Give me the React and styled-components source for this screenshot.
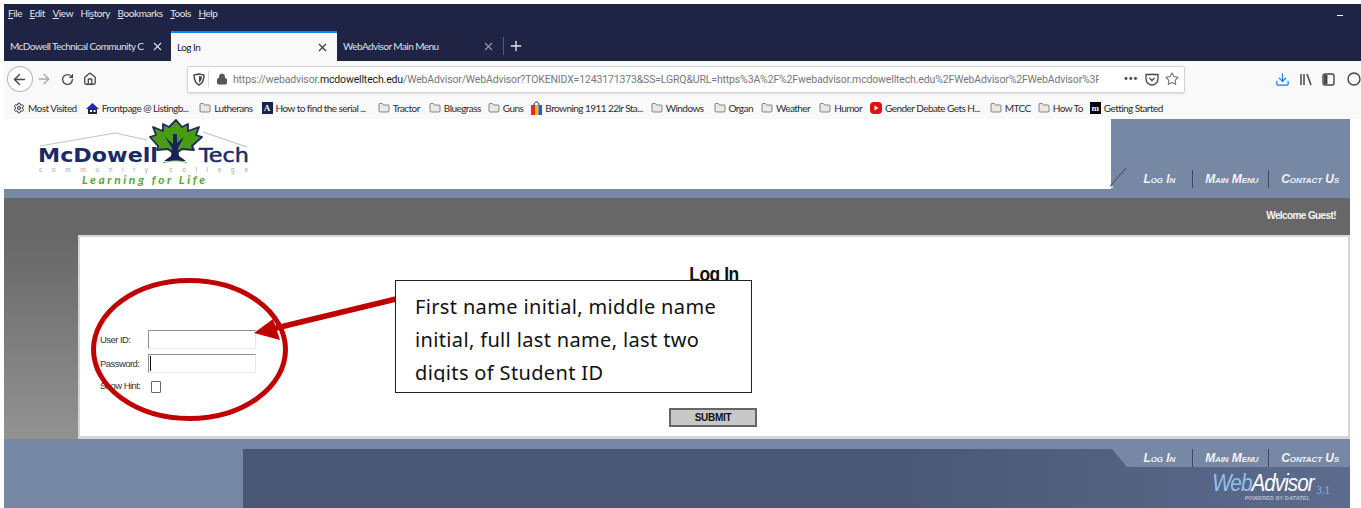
import styled, { createGlobalStyle } from 'styled-components'
import { ArrowLeft, ArrowRight, RotateCw, Home, X, Plus, Lock, Star, Download, Settings, Folder } from 'lucide-react'

const GlobalStyle = createGlobalStyle`
  html, body {
    margin: 0;
    background: #fff;
  }
  * {
    box-sizing: border-box;
  }
`

const Screen = styled.div`
  position: relative;
  width: 1361px;
  height: 508px;
  padding: 4px 0 0 4px;
  overflow: hidden;
  background: #fff;
  font-family: "Lato", "Liberation Sans", sans-serif;
`

/* browser chrome */
const MenuBar = styled.div`
  display: flex;
  align-items: center;
  height: 27px;
  padding: 0 18px 10px 4px;
  gap: 7.5px;
  background: #1f2344;
  color: #e4e5ea;
  font-size: 10px;
  letter-spacing: -0.42px;
  u { text-underline-offset: 1px; }
`
const Minimize = styled.span`
  width: 6px;
  height: 1px;
  margin-left: auto;
  margin-top: 6px;
  background: #fff;
`
const TabBar = styled.div`
  display: flex;
  align-items: stretch;
  height: 30px;
  background: #1f2344;
  color: #dfe0e6;
  font-size: 10px;
  letter-spacing: -0.55px;
`
const Tab = styled.div`
  display: flex;
  align-items: center;
  justify-content: space-between;
  width: ${p => p.$width}px;
  padding: 0 ${p => p.$right}px 0 ${p => p.$left}px;
  white-space: nowrap;
  ${p => p.$active && `
    background: #f9f9fa;
    color: #222;
    border-top: 2px solid #0a84ff;
  `}
`
const TabTitle = styled.span`
  display: block;
  width: ${p => p.$width}px;
  overflow: hidden;
`
const TabSep = styled.span`
  width: 1px;
  height: 18px;
  margin: 6px 4px 0 1px;
  background: #555a76;
`
const NewTab = styled.span`
  display: flex;
  align-items: center;
  color: #e4e5ea;
`
const NavBar = styled.div`
  display: flex;
  align-items: center;
  height: 33px;
  padding-top: 3px;
  background: #f9f9fa;
  color: #45454d;
`
const BackButton = styled.span`
  display: flex;
  align-items: center;
  justify-content: center;
  width: 26px;
  height: 26px;
  margin-left: 3px;
  border: 1px solid #b4b4b8;
  border-radius: 50%;
  background: #fff;
`
const NavIcon = styled.span`
  display: flex;
  margin-left: ${p => p.$gap}px;
  color: ${p => p.$color || 'inherit'};
`
const UrlBar = styled.div`
  display: flex;
  align-items: center;
  width: 1000px;
  height: 27px;
  margin-left: 90px;
  padding: 0 5px 0 5px;
  background: #fff;
  border: 1px solid #d4d4d6;
  border-radius: 2px;
  box-shadow: 0 1px 2px rgba(0, 0, 0, 0.12);
  font-family: "Roboto", sans-serif;
  font-size: 10.5px;
  letter-spacing: -0.15px;
  color: #77777d;
  white-space: nowrap;
`
const UrlText = styled.span`
  width: 866px;
  overflow: hidden;
  margin-left: 5px;
  b {
    font-weight: 400;
    color: #1c1c20;
  }
`
const UrlSep = styled.span`
  width: 1px;
  height: 16px;
  margin: 0 7px 0 3px;
  background: #d8d8da;
`
const Dots = styled.span`
  margin-left: auto;
  font-size: 12px;
  font-weight: 700;
  letter-spacing: 0.5px;
  color: #45454d;
  line-height: 8px;
`
const ToolbarGlyph = styled.svg`
  display: block;
  margin-left: ${p => p.$gap}px;
`
const BookmarkBar = styled.div`
  display: flex;
  align-items: center;
  height: 25px;
  padding: 3px 0 0 9px;
  background: #f9f9fa;
  color: #2c2c30;
  font-size: 10px;
  letter-spacing: -0.55px;
  white-space: nowrap;
`
const Bookmark = styled.span`
  display: flex;
  align-items: center;
  gap: 3px;
  margin-right: ${p => p.$gap ?? 8}px;
`
const Badge = styled.span`
  display: flex;
  align-items: center;
  justify-content: center;
  width: 11px;
  height: 12px;
  background: ${p => p.$bg};
  color: #fff;
  font: 700 9px "Liberation Serif", serif;
  letter-spacing: 0;
`

/* site header */
const Site = styled.div`
  width: 1346px;
`
const SiteHeader = styled.header`
  display: flex;
  justify-content: space-between;
  height: 70px;
`
const Logo = styled.svg`
  display: block;
`
const HeaderPanel = styled.div`
  display: flex;
  align-items: flex-end;
  justify-content: flex-end;
  width: 239px;
  padding-bottom: 1px;
  background: #7688a4;
`
const NavLinks = styled.nav`
  display: flex;
  align-items: stretch;
  height: 18px;
  padding-right: 11px;
`
const NavLink = styled.a`
  display: flex;
  align-items: center;
  padding: 0 ${p => p.$right}px 0 ${p => p.$left}px;
  color: #f1f3f6;
  font: italic 700 12px "Liberation Sans", sans-serif;
  font-variant: small-caps;
  letter-spacing: -0.1px;
  white-space: nowrap;
  & + & {
    border-left: 1px solid #3c4a66;
  }
`
const Notch = styled.svg`
  margin: 0 auto 0 -2px;
  align-self: flex-end;
`
const Divider = styled.div`
  height: 9px;
  background: #7688a4;
`
const WelcomeBar = styled.div`
  display: flex;
  align-items: center;
  justify-content: flex-end;
  height: 37px;
  padding: 0 14px 2px 0;
  background: #676767;
  color: #f4f4f4;
  font: 700 10px "Liberation Sans", sans-serif;
  letter-spacing: -0.6px;
`
const Body = styled.div`
  display: flex;
  height: 204px;
  background: linear-gradient(#676767, #929292);
  padding-left: 74px;
`
const Card = styled.main`
  position: relative;
  flex: 1;
  padding: 26px 0 0 20px;
  background: #fff;
  border: 2px solid #d6d6d6;
  border-bottom-width: 3px;
`
const Heading = styled.h1`
  margin: 0 0 0 -20px;
  text-align: center;
  color: #111;
  font: 700 20px/22px "Liberation Sans", sans-serif;
  letter-spacing: -0.5px;
  transform: scaleX(0.87);
`
const Form = styled.div`
  display: grid;
  grid-template-columns: 48px 108px;
  row-gap: 5px;
  align-items: center;
  margin-top: 45px;
  color: #333;
  font: 9.5px "Liberation Sans", sans-serif;
  letter-spacing: -0.55px;
  white-space: nowrap;
`
const Field = styled.div`
  height: 19px;
  padding-left: 1px;
  background: #fff;
  border: 1px solid #e6e6e6;
  border-top: 1px solid #8e8e8e;
  border-left: 1px solid #8e8e8e;
`
const Caret = styled.div`
  width: 1px;
  height: 15px;
  margin-top: 1px;
  background: #111;
`
const Checkbox = styled.div`
  width: 10px;
  height: 12px;
  margin: 3px 0 0 3px;
  border: 1px solid #666;
  border-radius: 1px;
`
const SubmitRow = styled.div`
  display: flex;
  justify-content: flex-end;
  margin: 15px 591px 0 0;
`
const Submit = styled.button`
  width: 88px;
  height: 19px;
  padding: 0;
  background: #c8c8c8;
  border: 2px solid #666;
  color: #111;
  font: 700 10px "Liberation Sans", sans-serif;
  letter-spacing: -0.3px;
`

/* site footer */
const SiteFooter = styled.footer`
  display: flex;
  height: 70px;
  background: #7688a4;
  padding: 10px 0 0 239px;
`
const FooterPanel = styled.div`
  display: flex;
  flex: 1;
  flex-direction: column;
  background: linear-gradient(90deg, #4a5875 60%, #5c6c8e 100%);
`
const FooterNav = styled.div`
  display: flex;
  justify-content: flex-end;
  height: 18px;
  margin-left: auto;
  width: 238px;
  background: #7688a4;
  clip-path: polygon(0 0, 100% 0, 100% 100%, 15px 100%);
`
const Brand = styled.div`
  align-self: flex-end;
  margin: 3px 20px 0 0;
  color: #fff;
  font: italic 400 24px/25px "Liberation Sans", sans-serif;
  letter-spacing: -1.1px;
  white-space: nowrap;
  transform: scaleX(0.86);
  transform-origin: right center;
`
const BrandWeb = styled.span`
  color: #8fc1ef;
`
const BrandVersion = styled.span`
  position: relative;
  top: 3px;
  margin-left: 3px;
  color: #8db4dc;
  font: 400 13px "Liberation Serif", serif;
  letter-spacing: 0;
`
const PoweredBy = styled.div`
  margin: 0 20px 0 0;
  align-self: flex-end;
  padding-right: 20px;
  color: #b4bfd2;
  font: italic 700 5.5px "Liberation Sans", sans-serif;
  letter-spacing: 0.1px;
`

/* instructions laid over the form */
const Overlay = styled.svg`
  position: absolute;
  top: 0;
  left: 0;
  pointer-events: none;
`
const Callout = styled.div`
  position: absolute;
  top: 280px;
  left: 395px;
  width: 357px;
  height: 113px;
  padding: 9px 19px 0;
  background: #fff;
  border: 1.5px solid #222;
  overflow: hidden;
`
const CalloutText = styled.div`
  height: 92px;
  overflow: hidden;
  color: #111;
  font: 400 20px/33px "Noto Sans", sans-serif;
  letter-spacing: 0.35px;
`

const folder = <Folder size={12} fill="#e8e8e4" color="#55555a" strokeWidth={1.4} />

function FrontpageIcon() {
  return (
    <svg width="13" height="13" viewBox="0 0 13 13">
      <path d="M0 7 L6.5 1 L13 7 Z" fill="#1a2fb0" />
      <rect x="2" y="7" width="9" height="5" fill="#26262e" />
      <rect x="4" y="8" width="2" height="2" fill="#fff" />
      <rect x="7.5" y="8" width="2" height="2" fill="#fff" />
    </svg>
  )
}

function BrowningIcon() {
  return (
    <svg width="11" height="15" viewBox="0 0 11 15">
      <path d="M3 4 C3 0 8 0 8 4" fill="none" stroke="#222" />
      <rect x="0" y="4" width="4" height="10" fill="#d92c2c" />
      <rect x="4" y="4" width="3.5" height="10" fill="#f2b705" />
      <rect x="7.5" y="4" width="3.5" height="10" fill="#1f5fc4" />
    </svg>
  )
}

function YoutubeIcon() {
  return (
    <svg width="12" height="12" viewBox="0 0 12 12">
      <rect width="12" height="12" rx="4" fill="#e01010" />
      <path d="M4.5 3.5 L8.5 6 L4.5 8.5 Z" fill="#fff" />
    </svg>
  )
}

function ShieldIcon() {
  return (
    <svg width="12" height="13" viewBox="0 0 12 13">
      <path d="M1 2 L6 1 L11 2 C11 7 10 10 6 12 C2 10 1 7 1 2 Z" fill="none" stroke="#45454d" strokeWidth="1.4" />
      <path d="M6 3 L9 3.5 C9 6.5 8 8.5 6 9.5 Z" fill="#45454d" />
    </svg>
  )
}

function PocketIcon() {
  return (
    <ToolbarGlyph $gap={7} width="14" height="13" viewBox="0 0 14 13">
      <path d="M1 1.5 H13 V6 C13 9.5 10 12 7 12 C4 12 1 9.5 1 6 Z" fill="none" stroke="#45454d" strokeWidth="1.3" />
      <path d="M4.5 5 L7 7.5 L9.5 5" fill="none" stroke="#45454d" strokeWidth="1.3" />
    </ToolbarGlyph>
  )
}

function SiteLogo() {
  return (
    <Logo width="260" height="70" viewBox="4 119 260 70">
      <path d="M40 146 L115 133 L147 140" fill="none" stroke="#b9c6d0" strokeWidth="1.2" />
      <path d="M203 132 L247 147" fill="none" stroke="#b9c6d0" strokeWidth="1.2" />
      <path
        d="M176 120 L182 127 L188 124 L188 131 L199 127 L196 135 L202 137 L192 146 L194 150 L182 149 L178 152 L172 152 L168 149 L157 150 L158 146 L150 137 L156 135 L153 127 L163 131 L163 124 L169 127 Z"
        fill="#4a9a12"
        stroke="#1c2a5e"
        strokeWidth="1.8"
        strokeLinejoin="round"
      />
      <path
        d="M173 134 L177 134 L177 143 L184 137 L178 148 L179 156 L186 161 L164 161 L171 156 L172 148 L165 137 L173 144 Z"
        fill="#16225a"
      />
      <path d="M163 163 C172 160 180 160 187 163" fill="none" stroke="#6fae3c" strokeWidth="1" />
      <text x="38" y="162" fontFamily="DejaVu Sans" fontWeight="700" fontSize="20" fill="#1b2a63" textLength="120" lengthAdjust="spacingAndGlyphs">McDowell</text>
      <text x="199" y="162" fontFamily="DejaVu Sans" fontSize="20" fontWeight="400" stroke="#1b2a63" strokeWidth="0.5" fill="#1b2a63" textLength="50" lengthAdjust="spacingAndGlyphs">Tech</text>
      <text x="39" y="171.5" fontFamily="Liberation Sans" fontSize="6.5" fill="#a8a8a8" textLength="209">community college</text>
      <text x="82" y="184" fontFamily="Lato" fontWeight="700" fontStyle="italic" fontSize="12" fill="#5aa531" textLength="123">Learning for Life</text>
    </Logo>
  )
}

function SiteLinks() {
  return (
    <NavLinks>
      <NavLink $left={0} $right={17}>Log In</NavLink>
      <NavLink $left={12} $right={10}>Main Menu</NavLink>
      <NavLink $left={12} $right={0}>Contact Us</NavLink>
    </NavLinks>
  )
}

export default function App() {
  return (
    <Screen>
      <GlobalStyle />

      <MenuBar>
        <span><u>F</u>ile</span>
        <span><u>E</u>dit</span>
        <span><u>V</u>iew</span>
        <span>Hi<u>s</u>tory</span>
        <span><u>B</u>ookmarks</span>
        <span><u>T</u>ools</span>
        <span><u>H</u>elp</span>
        <Minimize />
      </MenuBar>

      <TabBar>
        <Tab $width={167} $left={6} $right={7}>
          <TabTitle $width={137}>McDowell Technical Community C</TabTitle>
          <X size={13} />
        </Tab>
        <Tab $active $width={166} $left={6} $right={8}>
          Log In
          <X size={13} color="#333" />
        </Tab>
        <Tab $width={165} $left={6} $right={7}>
          WebAdvisor Main Menu
          <X size={13} color="#9a9cac" />
        </Tab>
        <TabSep />
        <NewTab><Plus size={16} /></NewTab>
      </TabBar>

      <NavBar>
        <BackButton><ArrowLeft size={17} /></BackButton>
        <NavIcon $gap={3} $color="#a8a8ac"><ArrowRight size={16} /></NavIcon>
        <NavIcon $gap={9}><RotateCw size={13} strokeWidth={2.4} /></NavIcon>
        <NavIcon $gap={9}><Home size={14} strokeWidth={2.2} /></NavIcon>
        <UrlBar>
          <ShieldIcon />
          <UrlSep />
          <Lock size={12} fill="#55555a" color="#55555a" />
          <UrlText>
            https://webadvisor.<b>mcdowelltech.edu</b>/WebAdvisor/WebAdvisor?TOKENIDX=1243171373&amp;SS=LGRQ&amp;URL=https%3A%2F%2Fwebadvisor.mcdowelltech.edu%2FWebAdvisor%2FWebAdvisor%3F
          </UrlText>
          <Dots>•••</Dots>
          <PocketIcon />
          <NavIcon $gap={6}><Star size={14} /></NavIcon>
        </UrlBar>
        <NavIcon $gap={90} $color="#0a84ff"><Download size={15} /></NavIcon>
        <ToolbarGlyph $gap={10} width="12" height="13" viewBox="0 0 12 13">
          <path d="M1 1 V12 M4 1 V12 M7 1 L11 12" fill="none" stroke="#45454d" strokeWidth="1.5" />
        </ToolbarGlyph>
        <ToolbarGlyph $gap={10} width="13" height="13" viewBox="0 0 13 13">
          <rect x="1" y="1" width="11" height="11" rx="2" fill="none" stroke="#45454d" strokeWidth="1.4" />
          <rect x="2" y="2" width="3.5" height="9" fill="#45454d" />
        </ToolbarGlyph>
        <ToolbarGlyph $gap={12} width="14" height="14" viewBox="0 0 14 14">
          <circle cx="7" cy="7" r="6" fill="none" stroke="#45454d" strokeWidth="1.4" />
        </ToolbarGlyph>
      </NavBar>

      <BookmarkBar>
        <Bookmark $gap={9}><Settings size={12} />Most Visited</Bookmark>
        <Bookmark $gap={11}><FrontpageIcon />Frontpage @ Listingb...</Bookmark>
        <Bookmark $gap={9}>{folder}Lutherans</Bookmark>
        <Bookmark $gap={12}><Badge $bg="#16224f">A</Badge>How to find the serial ...</Bookmark>
        <Bookmark $gap={9}>{folder}Tractor</Bookmark>
        <Bookmark $gap={7}>{folder}Bluegrass</Bookmark>
        <Bookmark>{folder}Guns</Bookmark>
        <Bookmark><BrowningIcon />Browning 1911 22lr Sta...</Bookmark>
        <Bookmark $gap={10}>{folder}Windows</Bookmark>
        <Bookmark>{folder}Organ</Bookmark>
        <Bookmark $gap={9}>{folder}Weather</Bookmark>
        <Bookmark>{folder}Humor</Bookmark>
        <Bookmark $gap={10}><YoutubeIcon />Gender Debate Gets H...</Bookmark>
        <Bookmark $gap={7}>{folder}MTCC</Bookmark>
        <Bookmark $gap={7}>{folder}How To</Bookmark>
        <Bookmark><Badge $bg="#000">m</Badge>Getting Started</Bookmark>
      </BookmarkBar>

      <Site>
        <SiteHeader>
          <SiteLogo />
          <HeaderPanel>
            <Notch width="20" height="22" viewBox="0 0 20 22">
              <path d="M1 21 L3 18 L17 2" fill="none" stroke="#59657e" strokeWidth="1.5" />
              <path d="M0 21 H4" stroke="#f4f4f4" strokeWidth="1.5" />
            </Notch>
            <SiteLinks />
          </HeaderPanel>
        </SiteHeader>
        <Divider />
        <WelcomeBar>Welcome Guest!</WelcomeBar>
        <Body>
          <Card>
            <Heading>Log In</Heading>
            <Form>
              <span>User ID:</span>
              <Field />
              <span>Password:</span>
              <Field><Caret /></Field>
              <span>Show Hint:</span>
              <Checkbox />
            </Form>
            <SubmitRow><Submit>SUBMIT</Submit></SubmitRow>
          </Card>
        </Body>
        <SiteFooter>
          <FooterPanel>
            <FooterNav><SiteLinks /></FooterNav>
            <Brand><BrandWeb>Web</BrandWeb>Advisor<BrandVersion>3.1</BrandVersion></Brand>
            <PoweredBy>POWERED BY DATATEL</PoweredBy>
          </FooterPanel>
        </SiteFooter>
      </Site>

      <Overlay width="1361" height="508" viewBox="0 0 1361 508">
        <ellipse cx="189.5" cy="349.5" rx="96" ry="69" fill="none" stroke="#c00000" strokeWidth="5" />
        <path d="M396 299 L272 329" stroke="#c00000" strokeWidth="5.5" />
        <path d="M254 333 L273 319 L280 340 Z" fill="#c00000" />
      </Overlay>
      <Callout>
        <CalloutText>
          First name initial, middle name initial, full last name, last two digits of Student ID
        </CalloutText>
      </Callout>
    </Screen>
  )
}
